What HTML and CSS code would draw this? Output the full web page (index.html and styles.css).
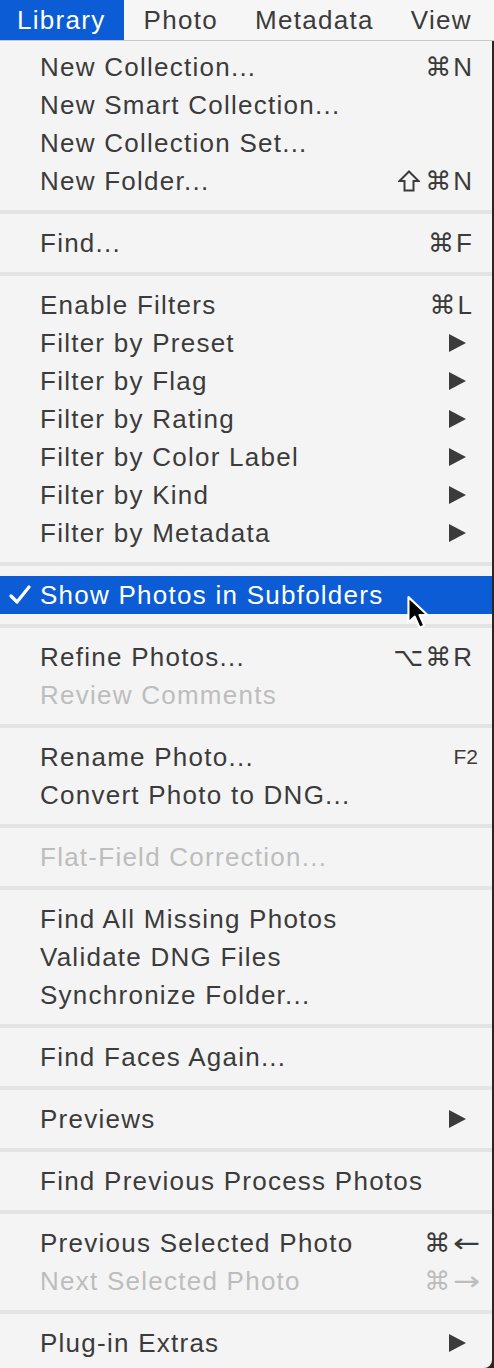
FILE: index.html
```html
<!DOCTYPE html>
<html lang="en">
<head>
    <meta charset="UTF-8">
    <meta name="viewport" content="width=device-width, initial-scale=1.0">
    <title>Library Menu</title>
    <link rel="stylesheet" href="styles.css">
</head>
<body>
    <div class="menubar">
        <span class="top-item active">Library</span>
        <span class="top-item">Photo</span>
        <span class="top-item">Metadata</span>
        <span class="top-item">View</span>
    </div>

    <div class="menu">
        <div class="item"><span>New Collection...</span><span class="key"><i>⌘</i>N</span></div>
        <div class="item"><span>New Smart Collection...</span></div>
        <div class="item"><span>New Collection Set...</span></div>
        <div class="item"><span>New Folder...</span>
            <span class="key">
                <svg class="shift" width="22" height="22" viewBox="0 0 22 22">
                    <path d="M11 1.5 L20.5 11 L15.5 11 L15.5 20.5 L6.5 20.5 L6.5 11 L1.5 11 Z" fill="none" stroke="#3b3b3b" stroke-width="2" stroke-linejoin="miter"/>
                </svg><i>⌘</i>N
            </span>
        </div>
        <div class="sep"></div>

        <div class="item"><span>Find...</span><span class="key"><i>⌘</i>F</span></div>
        <div class="sep"></div>

        <div class="item"><span>Enable Filters</span><span class="key"><i>⌘</i>L</span></div>
        <div class="item"><span>Filter by Preset</span><span class="arrow"></span></div>
        <div class="item"><span>Filter by Flag</span><span class="arrow"></span></div>
        <div class="item"><span>Filter by Rating</span><span class="arrow"></span></div>
        <div class="item"><span>Filter by Color Label</span><span class="arrow"></span></div>
        <div class="item"><span>Filter by Kind</span><span class="arrow"></span></div>
        <div class="item"><span>Filter by Metadata</span><span class="arrow"></span></div>
        <div class="sep"></div>

        <div class="item selected">
            <svg class="check" width="22" height="20" viewBox="0 0 22 20">
                <path d="M2 11 L8 17 L20 2" fill="none" stroke="#fff" stroke-width="3.2" stroke-linecap="round" stroke-linejoin="round"/>
            </svg>
            <span>Show Photos in Subfolders</span>
            <svg class="cursor" width="26" height="38" viewBox="0 0 24 36">
                <path d="M2 2 L2 26 L8 20.5 L12.5 31 L17 29 L12.5 19 L20 19 Z" fill="#000" stroke="#fff" stroke-width="2" stroke-linejoin="round"/>
            </svg>
        </div>
        <div class="sep"></div>

        <div class="item"><span>Refine Photos...</span><span class="key"><i>⌥</i><i>⌘</i>R</span></div>
        <div class="item disabled"><span>Review Comments</span></div>
        <div class="sep"></div>

        <div class="item"><span>Rename Photo...</span><span class="key small">F2</span></div>
        <div class="item"><span>Convert Photo to DNG...</span></div>
        <div class="sep"></div>

        <div class="item disabled"><span>Flat-Field Correction...</span></div>
        <div class="sep"></div>

        <div class="item"><span>Find All Missing Photos</span></div>
        <div class="item"><span>Validate DNG Files</span></div>
        <div class="item"><span>Synchronize Folder...</span></div>
        <div class="sep"></div>

        <div class="item"><span>Find Faces Again...</span></div>
        <div class="sep"></div>

        <div class="item"><span>Previews</span><span class="arrow"></span></div>
        <div class="sep"></div>

        <div class="item"><span>Find Previous Process Photos</span></div>
        <div class="sep"></div>

        <div class="item"><span>Previous Selected Photo</span><span class="key wide"><i>⌘</i><b>←</b></span></div>
        <div class="item disabled"><span>Next Selected Photo</span><span class="key wide"><i>⌘</i><b>→</b></span></div>
        <div class="sep"></div>

        <div class="item"><span>Plug-in Extras</span><span class="arrow"></span></div>
    </div>
</body>
</html>
```

FILE: styles.css
```css
body {
    margin: 0;
    background: #2b2522;
    font-family: "Liberation Sans", Arial, sans-serif;
    color: #3b3b3b;
}
.menubar {
    height: 40px;
    display: flex;
    align-items: stretch;
    background: #f6f6f6;
    border-bottom: 1px solid #c9c9c9;
    font-size: 26px;
}
.top-item {
    display: flex;
    align-items: center;
    padding: 0 18px 0 17px;
    margin-right: 2px;
    letter-spacing: 1.3px;
}
.top-item.active {
    background: #0b5cd5;
    color: #fff;
    margin-right: 3px;
}
.menu {
    width: 492px;
    background: #f4f4f4;
    padding: 7px 0 6px;
    border-bottom-right-radius: 8px;
    font-size: 26px;
}
.item {
    position: relative;
    height: 38px;
    display: flex;
    align-items: center;
    justify-content: space-between;
    padding: 0 20px 0 40px;
    letter-spacing: 1.25px;
}
.item.disabled {
    color: #bdbdbd;
}
.item.selected {
    background: #0b5cd5;
    color: #fff;
    justify-content: flex-start;
}
.sep {
    height: 4px;
    margin: 10px 0;
    background: #e4e4e4;
}
.key {
    display: flex;
    align-items: center;
    font-size: 26px;
    letter-spacing: 0;
}
.key i {
    font-style: normal;
    font-family: "DejaVu Sans", sans-serif;
    font-size: 26px;
    margin-right: 2px;
}
.key b {
    font-weight: normal;
    font-family: "DejaVu Sans", sans-serif;
    font-size: 26px;
    transform: scaleX(1.25);
    margin-left: 4px;
}
.disabled .shift path {
    stroke: #bdbdbd;
}
.shift {
    margin-right: 5px;
}
.key.small {
    font-size: 21px;
    margin-right: -6px;
}
.key.wide {
    margin-right: -6px;
}
.arrow {
    width: 0;
    height: 0;
    border-left: 17px solid #3b3b3b;
    border-top: 9px solid transparent;
    border-bottom: 9px solid transparent;
    margin-right: 6px;
}
.check {
    position: absolute;
    left: 9px;
    top: 9px;
}
.cursor {
    position: absolute;
    left: 406px;
    top: 19px;
}
```
